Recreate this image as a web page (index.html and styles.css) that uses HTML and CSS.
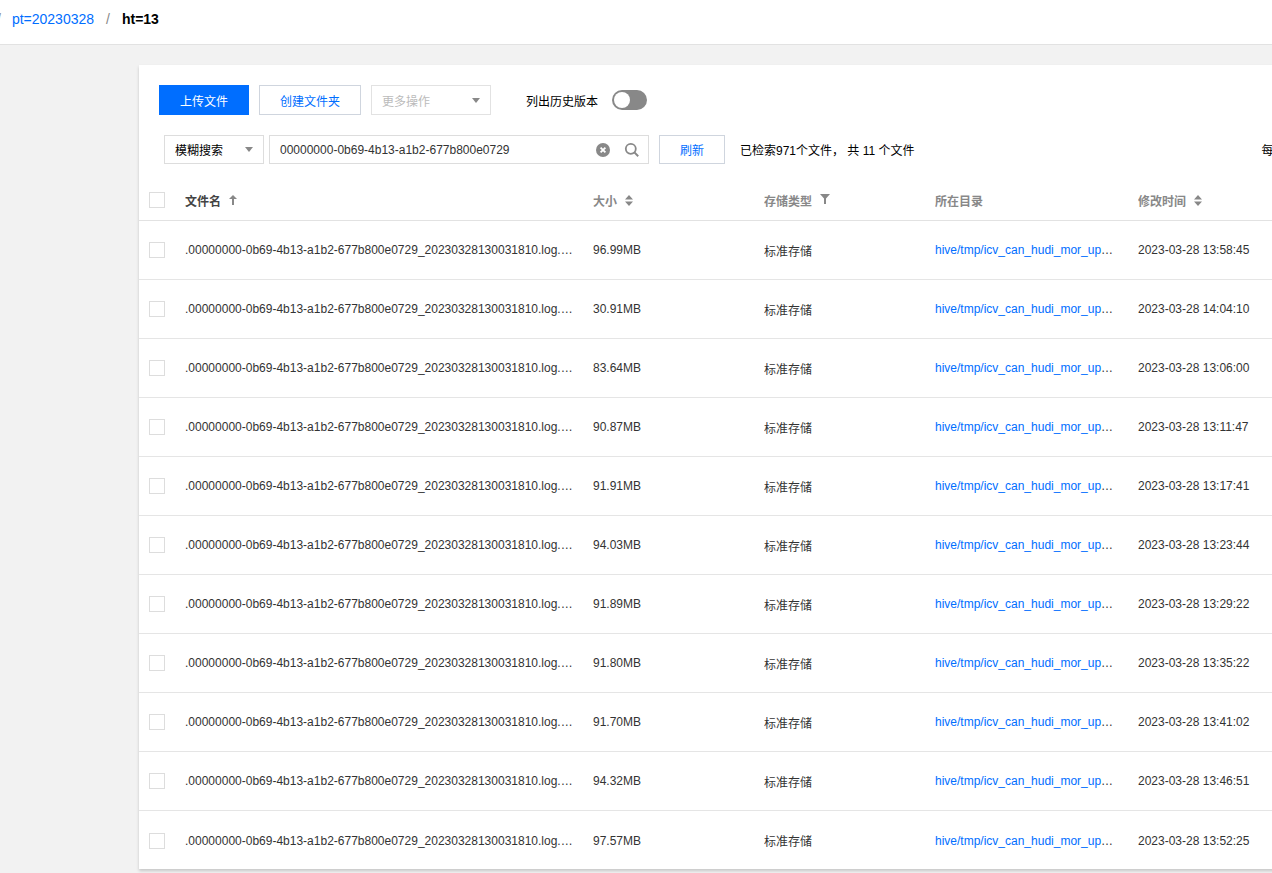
FILE: index.html
```html
<!DOCTYPE html>
<html>
<head>
<meta charset="utf-8">
<link rel="stylesheet" href="styles.css">
</head>
<body>
<div class="topbar">
  <span class="crumb-sep cut">/</span>
  <a class="crumb-link">pt=20230328</a>
  <span class="crumb-sep">/</span>
  <span class="crumb-cur">ht=13</span>
</div>
<div class="main">
  <div class="card">
    <div class="toolbar">
      <button class="btn btn-primary">上传文件</button>
      <button class="btn btn-default">创建文件夹</button>
      <div class="select disabled"><span>更多操作</span><i class="caret"></i></div>
      <span class="hist-label">列出历史版本</span>
      <span class="switch"><span class="knob"></span></span>
    </div>
    <div class="searchbar">
      <div class="select search-type"><span>模糊搜索</span><i class="caret"></i></div>
      <div class="input">
        <span class="input-text">00000000-0b69-4b13-a1b2-677b800e0729</span>
        <svg class="ic-clear" width="14" height="14" viewBox="0 0 14 14"><circle cx="7" cy="7" r="7" fill="#888"/><path d="M4.6 4.6 L9.4 9.4 M9.4 4.6 L4.6 9.4" stroke="#fff" stroke-width="1.8"/></svg>
        <svg class="ic-search" width="16" height="16" viewBox="0 0 16 16"><circle cx="6.8" cy="6.8" r="5" fill="none" stroke="#888" stroke-width="1.8"/><path d="M10.4 10.4 L14.2 14.2" stroke="#888" stroke-width="2"/></svg>
      </div>
      <button class="btn btn-default btn-refresh">刷新</button>
      <span class="result">已检索971个文件， 共 11 个文件</span>
      <span class="per-page">每页</span>
    </div>
    <div class="table">
      <div class="row head">
        <div class="c c-chk"><span class="chk"></span></div>
        <div class="c c-name th th-active">文件名
          <svg class="ic-sort" width="8" height="10" viewBox="0 0 8 10"><path d="M4 0 L8 4 L5 4 L5 10 L3 10 L3 4 L0 4 Z" fill="#888"/></svg>
        </div>
        <div class="c c-size th">大小
          <svg class="ic-sort" width="8" height="11" viewBox="0 0 8 11"><path d="M4 0 L8 4.5 L0 4.5 Z M0 6.5 L8 6.5 L4 11 Z" fill="#888"/></svg>
        </div>
        <div class="c c-type th">存储类型
          <svg class="ic-sort" width="10" height="10" viewBox="0 0 10 10"><path d="M0 0 L10 0 L6 4.5 L6 10 L4 10 L4 4.5 Z" fill="#888"/></svg>
        </div>
        <div class="c c-dir th">所在目录</div>
        <div class="c c-time th">修改时间
          <svg class="ic-sort" width="8" height="11" viewBox="0 0 8 11"><path d="M4 0 L8 4.5 L0 4.5 Z M0 6.5 L8 6.5 L4 11 Z" fill="#888"/></svg>
        </div>
      </div>
      <div id="rows"></div>
    </div>
  </div>
</div>
<script src="app.js"></script>
</body>
</html>
```
FILE: styles.css
```css
html, body { margin: 0; padding: 0; }
body {
  font-family: "Liberation Sans", "Noto Sans CJK SC", sans-serif;
  font-size: 12px;
  color: #333;
  background: #f2f2f2;
  width: 1272px;
  height: 873px;
  overflow: hidden;
}
.topbar {
  height: 45px;
  background: #fff;
  border-bottom: 1px solid #e2e2e2;
  box-sizing: border-box;
  display: flex;
  align-items: center;
  font-size: 14px;
  padding-bottom: 6px;
  white-space: nowrap;
}
.crumb-sep { color: #888; margin: 0 12px; }
.crumb-sep.cut { margin-left: -3px; margin-right: 11px; }
.crumb-link { color: #006eff; }
.crumb-cur { color: #000; font-weight: bold; }
.main { padding: 20px 0 0 139px; }
.card {
  width: 1200px;
  height: 804px;
  background: #fff;
  box-shadow: 0 2px 3px rgba(0,0,0,0.18);
}
.toolbar {
  display: flex;
  align-items: center;
  padding: 20px 0 0 20px;
  height: 30px;
}
.btn {
  font-family: inherit;
  font-size: 12px;
  height: 30px;
  box-sizing: border-box;
  padding: 0;
  cursor: pointer;
  margin-right: 10px;
}
.btn-primary { width: 90px; background: #006eff; color: #fff; border: none; }
.btn-default { width: 102px; background: #fff; color: #006eff; border: 1px solid #cfd5de; }
.select {
  height: 30px;
  box-sizing: border-box;
  border: 1px solid #ddd;
  display: flex;
  align-items: center;
  justify-content: space-between;
  padding: 0 10px;
  width: 120px;
  color: #333;
}
.select.disabled { color: #bbb; border-color: #e2e2e2; }
.caret {
  width: 0; height: 0;
  border-left: 4.5px solid transparent;
  border-right: 4.5px solid transparent;
  border-top: 5px solid #888;
}
.hist-label { margin-left: 35px; color: #000; }
.switch {
  margin-left: 14px;
  width: 35px; height: 20px;
  border-radius: 10px;
  background: #888;
  position: relative;
  display: inline-block;
}
.knob {
  position: absolute;
  left: 2px; top: 2px;
  width: 16px; height: 16px;
  border-radius: 50%;
  background: #fff;
}
.searchbar {
  display: flex;
  align-items: center;
  padding: 20px 0 0 25px;
  height: 29px;
  white-space: nowrap;
}
.search-type { width: 100px; border-color: #ddd; color: #000; height: 29px; }
.input {
  margin-left: 5px;
  width: 380px;
  height: 29px;
  box-sizing: border-box;
  border: 1px solid #ddd;
  display: flex;
  align-items: center;
  padding-left: 10px;
}
.input-text { flex: 1; color: #333; }
.ic-clear { margin-right: 14px; }
.ic-search { margin-right: 8px; }
.btn-refresh { width: 66px; height: 29px; margin-left: 10px; margin-right: 15px; }
.result { color: #000; }
.per-page { margin-left: 347px; color: #000; }
.table { margin-top: 16px; }
.row {
  display: flex;
  align-items: center;
  height: 59px;
  border-bottom: 1px solid #e5e5e5;
  box-sizing: border-box;
}
.row.head { height: 41px; border-bottom-color: #e2e2e2; }
.row:last-child { border-bottom: none; }
.c { box-sizing: border-box; white-space: nowrap; overflow: hidden; text-overflow: ellipsis; }
.c-chk { width: 46px; padding-left: 10px; display: flex; align-items: center; }
.chk { width: 16px; height: 16px; border: 1px solid #ddd; box-sizing: border-box; display: block; }
.c-name { width: 408px; padding-right: 20px; }
.c-size { width: 171px; }
.c-type { width: 171px; }
.c-dir { width: 203px; padding-right: 20px; }
.c-dir a { color: #006eff; }
.c-time { width: 150px; }
.th { color: #888; font-weight: bold; display: flex; align-items: center; }
.th-active { color: #444; }
.ic-sort { margin-left: 8px; }
.c-type .ic-sort { margin-top: -3px; }
```
FILE: app.js
```js
var data = [
  ["96.99MB","2023-03-28 13:58:45"],
  ["30.91MB","2023-03-28 14:04:10"],
  ["83.64MB","2023-03-28 13:06:00"],
  ["90.87MB","2023-03-28 13:11:47"],
  ["91.91MB","2023-03-28 13:17:41"],
  ["94.03MB","2023-03-28 13:23:44"],
  ["91.89MB","2023-03-28 13:29:22"],
  ["91.80MB","2023-03-28 13:35:22"],
  ["91.70MB","2023-03-28 13:41:02"],
  ["94.32MB","2023-03-28 13:46:51"],
  ["97.57MB","2023-03-28 13:52:25"]
];
var html = "";
data.forEach(function (d) {
  html += '<div class="row">' +
    '<div class="c c-chk"><span class="chk"></span></div>' +
    '<div class="c c-name">.00000000-0b69-4b13-a1b2-677b800e0729_20230328130031810.log.1_0-1-0</div>' +
    '<div class="c c-size">' + d[0] + '</div>' +
    '<div class="c c-type">标准存储</div>' +
    '<div class="c c-dir"><a>hive/tmp/icv_can_hudi_mor_upsert_ods/pt=20230328/ht=13</a></div>' +
    '<div class="c c-time">' + d[1] + '</div>' +
    '</div>';
});
document.getElementById("rows").innerHTML = html;
```
